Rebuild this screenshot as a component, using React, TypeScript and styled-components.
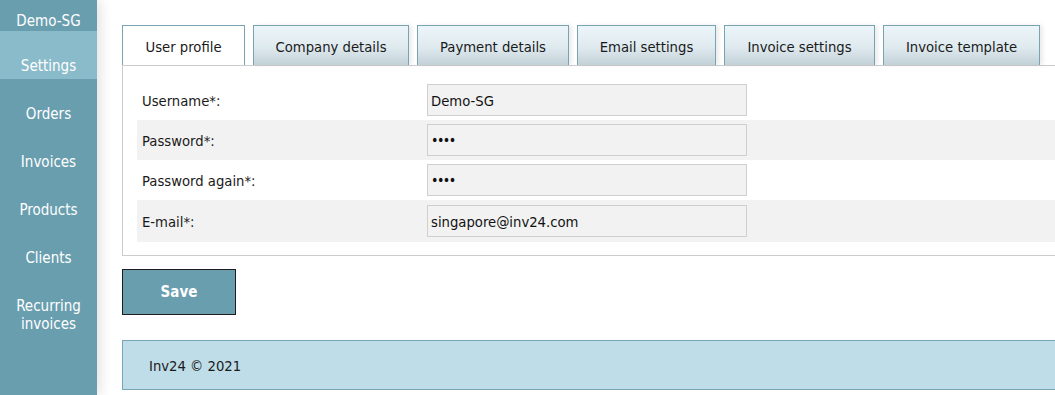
import React from "react";
import styled, { createGlobalStyle } from "styled-components";

const GlobalStyle = createGlobalStyle`
    html, body {
        margin: 0;
        padding: 0;
        background: #fff;
        overflow: hidden;
    }
    body {
        font-family: "DejaVu Sans Condensed", Tahoma, "Liberation Sans", sans-serif;
        color: #1a1a1a;
    }
`;

const menu = ["Settings", "Orders", "Invoices", "Products", "Clients", "Recurring invoices"];

const tabs = [
    { label: "User profile", width: 123 },
    { label: "Company details", width: 156 },
    { label: "Payment details", width: 152 },
    { label: "Email settings", width: 139 },
    { label: "Invoice settings", width: 151 },
    { label: "Invoice template", width: 157 },
];

const fields = [
    { label: "Username*:", value: "Demo-SG", type: "text" },
    { label: "Password*:", value: "test", type: "password" },
    { label: "Password again*:", value: "test", type: "password" },
    { label: "E-mail*:", value: "singapore@inv24.com", type: "text" },
];

const App = () => {
    return (
        <Layout>
            <GlobalStyle />
            <Sidebar>
                <Account>Demo-SG</Account>
                {menu.map((item, i) => (
                    <MenuItem key={item} active={i === 0}>
                        {item === "Recurring invoices" ? (
                            <>
                                Recurring
                                <br />
                                invoices
                            </>
                        ) : (
                            item
                        )}
                    </MenuItem>
                ))}
            </Sidebar>

            <Main>
                <TabRow>
                    {tabs.map((tab, i) => (
                        <Tab key={tab.label} active={i === 0} w={tab.width}>
                            {tab.label}
                        </Tab>
                    ))}
                </TabRow>

                <Panel>
                    {fields.map((f, i) => (
                        <FormRow key={f.label} striped={i % 2 === 1} last={i === fields.length - 1}>
                            <Label>{f.label}</Label>
                            <Input
                                type={f.type}
                                defaultValue={f.value}
                                masked={f.type === "password"}
                            />
                        </FormRow>
                    ))}
                </Panel>

                <SaveButton>Save</SaveButton>

                <Footer>Inv24 © 2021</Footer>
            </Main>
        </Layout>
    );
};

export default App;

const Layout = styled.div`
    display: flex;
    height: 395px;
    width: 1055px;
    overflow: hidden;
`;

const Sidebar = styled.div`
    width: 97px;
    flex-shrink: 0;
    background-color: #699eaf;
    box-shadow: 3px 0 12px rgba(0, 0, 0, 0.12);
    position: relative;
    z-index: 1;
    color: #fff;
    font-size: 15px;
    text-align: center;
`;

const Account = styled.div`
    height: 31px;
    box-sizing: border-box;
    padding-top: 12px;
    line-height: 18px;
`;

const MenuItem = styled.div<{ active?: boolean }>`
    padding: 26px 0 4px;
    line-height: 18px;
    background-color: ${({ active }) => (active ? "#8abbca" : "transparent")};
    cursor: pointer;
`;

const Main = styled.div`
    flex: 1;
    padding: 25px 0 0 25px;
    min-width: 0;
    font-size: 14.7px;
`;

const TabRow = styled.div`
    display: flex;
    gap: 8px;
    height: 40px;
    width: 1000px;
`;

const Tab = styled.div<{ active?: boolean; w: number }>`
    width: ${({ w }) => w}px;
    flex-shrink: 0;
    box-sizing: border-box;
    height: 40px;
    padding-top: 2px;
    display: flex;
    align-items: center;
    justify-content: center;
    border: 1px solid #7aa3b2;
    border-bottom: none;
    background: ${({ active }) =>
        active ? "#fff" : "linear-gradient(to bottom, #ecf5f9 0%, #dfeaef 55%, #c2d1d8 100%)"};
    box-shadow: ${({ active }) => (active ? "none" : "3px 0 4px rgba(0, 0, 0, 0.08)")};
    cursor: pointer;
`;

const Panel = styled.div`
    width: 1000px;
    border: 1px solid #cccccc;
    padding: 14px 14px 13px;
    box-sizing: border-box;
    background: #fff;
`;

const FormRow = styled.div<{ striped?: boolean; last?: boolean }>`
    display: flex;
    align-items: center;
    height: ${({ last }) => (last ? "42px" : "40px")};
    background-color: ${({ striped }) => (striped ? "#f2f2f2" : "#fff")};
    padding-left: 5px;
`;

const Label = styled.div`
    width: 285px;
    flex-shrink: 0;
`;

const Input = styled.input<{ masked?: boolean }>`
    width: 320px;
    height: 32px;
    box-sizing: border-box;
    border: 1px solid #cfcfcf;
    background: #f2f2f2;
    padding: 0 3px;
    font-family: inherit;
    font-size: ${({ masked }) => (masked ? "14px" : "14.7px")};
    letter-spacing: ${({ masked }) => (masked ? "-1.5px" : "normal")};
    color: #111;
    outline: none;
`;

const SaveButton = styled.button`
    display: block;
    margin-top: 13px;
    width: 114px;
    height: 46px;
    background-color: #699eaf;
    border: 1px solid #1e1e1e;
    color: #fff;
    font-family: inherit;
    font-size: 15px;
    font-weight: bold;
    cursor: pointer;
`;

const Footer = styled.div`
    margin-top: 25px;
    width: 1000px;
    height: 50px;
    box-sizing: border-box;
    background-color: #bfdde8;
    border: 1px solid #79a6b6;
    padding-left: 26px;
    display: flex;
    align-items: center;
`;
